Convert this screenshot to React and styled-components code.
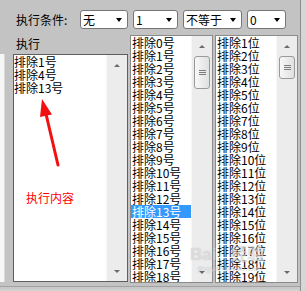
import React from 'react';
import styled, { createGlobalStyle } from 'styled-components';

const Global = createGlobalStyle`
  html, body { margin: 0; padding: 0; background: #c3c3c3; }
  body { font-family: "Noto Sans CJK SC", "Liberation Sans", sans-serif; }
`;

const Window = styled.div`
  position: relative;
  width: 306px;
  height: 291px;
  overflow: hidden;
  display: flex;
  background: #c3c3c3;
  font-family: "Noto Sans CJK SC", "Liberation Sans", sans-serif;
  font-size: 12px;
  color: #000;
`;

const Panel = styled.div`
  width: 300px;
  display: flex;
  flex-direction: column;
`;

const EdgeStrip = styled.div`
  flex: 1;
  border-left: 1px solid #8e8e8e;
  background: #d6d6d6;
`;

const Toolbar = styled.div`
  display: flex;
  align-items: center;
  gap: 5px;
  height: 19px;
  margin-top: 10px;
  padding-left: 16px;
`;

const Label = styled.span`
  width: ${p => p.$w || 'auto'};
  line-height: 13px;
  white-space: nowrap;
`;

const Select = styled.div`
  box-sizing: border-box;
  width: ${p => p.$w}px;
  height: 19px;
  border: 1px solid #767676;
  border-radius: 3px;
  background: #fff;
  display: flex;
  align-items: center;
  justify-content: space-between;
  padding: 0 5px 0 2px;
  line-height: 13px;
  white-space: nowrap;
`;

const DropArrow = styled.span`
  width: 0;
  height: 0;
  border-left: 3.5px solid transparent;
  border-right: 3.5px solid transparent;
  border-top: 4px solid #000;
`;

const Body = styled.div`
  display: flex;
  margin-top: 6px;
  height: 248px;
`;

const LeftColumn = styled.div`
  width: 128px;
  display: flex;
  flex-direction: column;
`;

const SubLabel = styled.div`
  height: 19px;
  box-sizing: border-box;
  padding: 2px 0 0 16px;
  line-height: 13px;
`;

const LeftRow = styled.div`
  display: flex;
  height: 228px;
`;

const Stub = styled.div`
  width: 4px;
  margin-right: 8px;
  background: #f6f6f6;
  border-right: 1px solid #d8d8d8;
`;

const ListBox = styled.div`
  position: relative;
  box-sizing: border-box;
  width: ${p => p.$w}px;
  height: ${p => p.$h}px;
  margin-left: ${p => p.$ml || 0}px;
  display: flex;
  background: #fff;
  border: 1px solid ${p => (p.$dark ? '#5e5e5e' : '#8a8a8a')};
`;

const Items = styled.div`
  flex: 1;
  overflow: hidden;
  display: flex;
  flex-direction: column;
`;

const Item = styled.div`
  height: 13px;
  line-height: 13px;
  padding-left: ${p => p.$pad || 0}px;
  white-space: nowrap;
  background: ${p => (p.$selected ? '#3399ff' : 'transparent')};
  color: ${p => (p.$selected ? '#fff' : '#000')};
`;

const ScrollBar = styled.div`
  width: 20px;
  display: flex;
  flex-direction: column;
  background: #ececec;
  border-left: 1px solid #f7f7f7;
`;

const ArrowBtn = styled.div`
  height: 20px;
  flex: none;
  display: flex;
  align-items: center;
  justify-content: center;
`;

const Tri = styled.span`
  width: 0;
  height: 0;
  border-left: 3px solid transparent;
  border-right: 3px solid transparent;
  ${p => (p.$down ? 'border-top: 3px solid #6a6a6a;' : 'border-bottom: 3px solid #6a6a6a;')}
`;

const Track = styled.div`
  flex: 1;
  display: flex;
  flex-direction: column;
`;

const Thumb = styled.div`
  box-sizing: border-box;
  height: ${p => p.$h}px;
  margin: 0 2px 0 2px;
  border: 1px solid #9a9a9a;
  border-radius: 3px;
  background: linear-gradient(90deg, #f8f8f8, #e0e0e0);
  display: flex;
  flex-direction: column;
  align-items: center;
  justify-content: center;
  gap: 1px;
`;

const Grip = styled.span`
  width: 7px;
  height: 1px;
  background: #7c7c7c;
`;

const Footer = styled.div`
  flex: 1;
  margin-top: 3px;
  border-top: 1px solid #a2a2a2;
  background: #d0d0d0;
  box-shadow: inset 0 2px 0 #c8c8c8;
`;

const Note = styled.div`
  position: absolute;
  left: 12px;
  top: 136px;
  color: #ff0000;
  line-height: 13px;
  white-space: nowrap;
`;

const Overlay = styled.svg`
  position: absolute;
  left: 0;
  top: 0;
  pointer-events: none;
`;

const Watermark = styled.div`
  position: absolute;
  left: 190px;
  top: 246px;
  display: flex;
  flex-direction: column;
  pointer-events: none;
  color: rgba(255, 255, 255, 0.5);
  text-shadow: 0 0 1px rgba(110, 110, 110, 0.45);
`;

const WmMain = styled.div`
  display: flex;
  align-items: baseline;
  gap: 14px;
  font-family: "Liberation Sans", "Noto Sans CJK SC", sans-serif;
  font-weight: bold;
  font-size: 17px;
  line-height: 18px;
`;

const WmSub = styled.div`
  font-family: "Liberation Sans", sans-serif;
  font-size: 8px;
  line-height: 10px;
  padding-left: 8px;
`;

const Scroll = ({ thumb }) => (
  <ScrollBar>
    <ArrowBtn><Tri /></ArrowBtn>
    <Track>
      {thumb ? (
        <Thumb $h={thumb}>
          <Grip /><Grip /><Grip />
        </Thumb>
      ) : null}
    </Track>
    <ArrowBtn><Tri $down /></ArrowBtn>
  </ScrollBar>
);

const numbers = Array.from({ length: 19 }, (_, i) => i);

export default function App() {
  return (
    <>
      <Global />
      <Window>
        <Panel>
          <Toolbar>
            <Label $w="59px">执行条件:</Label>
            <Select $w={48}>无<DropArrow /></Select>
            <Select $w={45}>1<DropArrow /></Select>
            <Select $w={59}>不等于<DropArrow /></Select>
            <Select $w={39}>0<DropArrow /></Select>
          </Toolbar>
          <Body>
            <LeftColumn>
              <SubLabel>执行</SubLabel>
              <LeftRow>
                <Stub />
                <ListBox $w={116} $h={228} $dark>
                  <Items>
                    <Item>排除1号</Item>
                    <Item>排除4号</Item>
                    <Item>排除13号</Item>
                  </Items>
                  <Scroll />
                  <Note>执行内容</Note>
                </ListBox>
              </LeftRow>
            </LeftColumn>
            <ListBox $w={83} $h={248} $ml={2}>
              <Items>
                {numbers.map(n => (
                  <Item key={n} $pad={1} $selected={n === 13}>排除{n}号</Item>
                ))}
              </Items>
              <Scroll thumb={33} />
            </ListBox>
            <ListBox $w={83} $h={248} $ml={2}>
              <Items>
                {numbers.map(n => (
                  <Item key={n} $pad={1}>排除{n + 1}位</Item>
                ))}
              </Items>
              <Scroll thumb={23} />
            </ListBox>
          </Body>
          <Footer />
        </Panel>
        <EdgeStrip />
        <Overlay width="306" height="291" viewBox="0 0 306 291">
          <line x1="58" y1="165" x2="46" y2="114" stroke="#f21010" strokeWidth="3" strokeLinecap="round" />
          <polygon points="42,99 40,117 52,114.5" fill="#f21010" />
        </Overlay>
        <Watermark>
          <WmMain><span>Bai</span><span>经验</span></WmMain>
          <WmSub>jingyan.baidu.com</WmSub>
        </Watermark>
      </Window>
    </>
  );
}
